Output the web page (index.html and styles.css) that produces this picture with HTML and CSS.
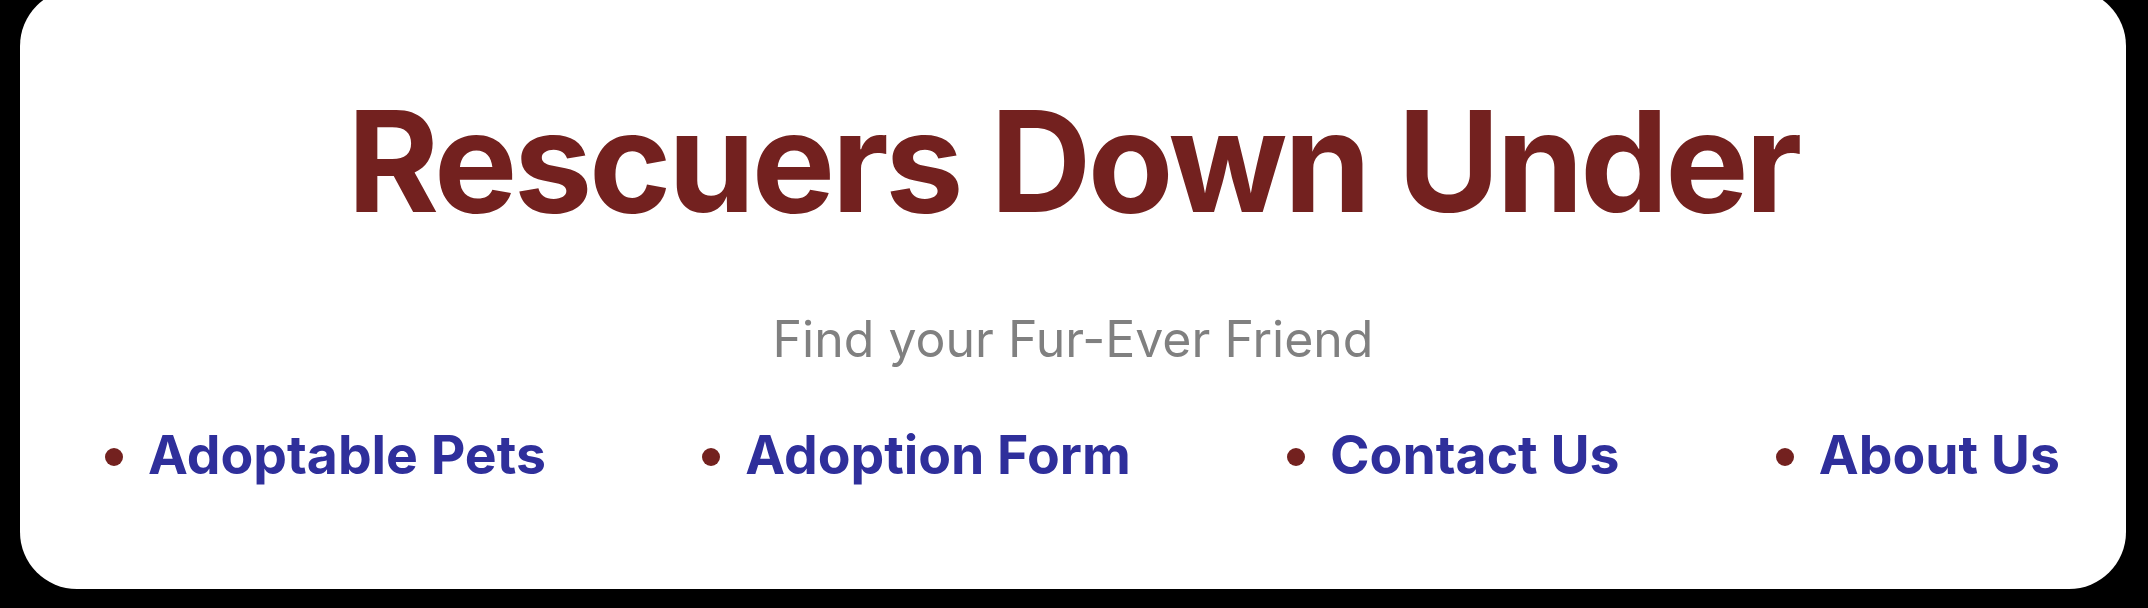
FILE: index.html
```html
<!DOCTYPE html>
<html lang="en">
<head>
<meta charset="utf-8">
<title>Rescuers Down Under</title>
<link rel="stylesheet" href="styles.css">
</head>
<body>
<header class="card">
  <h1 class="title">Rescuers Down Under</h1>
  <p class="tagline">Find your Fur-Ever Friend</p>
  <nav class="nav">
    <ul class="nav-list">
      <li class="nav-item"><a class="nav-link" href="#">Adoptable Pets</a></li>
      <li class="nav-item"><a class="nav-link" href="#">Adoption Form</a></li>
      <li class="nav-item"><a class="nav-link" href="#">Contact Us</a></li>
      <li class="nav-item"><a class="nav-link" href="#">About Us</a></li>
    </ul>
  </nav>
</header>
</body>
</html>
```
FILE: styles.css
```css
html, body {
  margin: 0;
  padding: 0;
  background: #000;
  height: 100%;
  overflow: hidden;
}
body {
  font-family: Inter, "Noto Sans", "Liberation Sans", sans-serif;
}
.card {
  background: #fff;
  margin: -11px 22px 0 20px;
  height: 600px;
  box-sizing: border-box;
  border-radius: 57px;
  display: flex;
  flex-direction: column;
  align-items: center;
  padding-top: 102px;
}
.title {
  margin: 0;
  font-size: 140px;
  font-weight: 700;
  line-height: 140px;
  letter-spacing: -3.4px;
  color: #73211f;
}
.tagline {
  margin: 78px 0 0;
  font-size: 50px;
  line-height: 60px;
  color: #808080;
}
.nav {
  align-self: stretch;
  margin-top: 54px;
}
.nav-list {
  list-style: none;
  margin: 0;
  padding: 0 66px 0 128px;
  display: flex;
  justify-content: space-between;
}
.nav-item {
  display: flex;
  align-items: center;
  position: relative;
}
.nav-item::before {
  content: "";
  position: absolute;
  left: -43px;
  top: 50%;
  width: 18px;
  height: 18px;
  margin-top: -7px;
  border-radius: 50%;
  background: #73211f;
}
.nav-link {
  font-size: 53.5px;
  font-weight: 700;
  line-height: 64px;
  color: #2f2f9b;
  text-decoration: none;
}
```
